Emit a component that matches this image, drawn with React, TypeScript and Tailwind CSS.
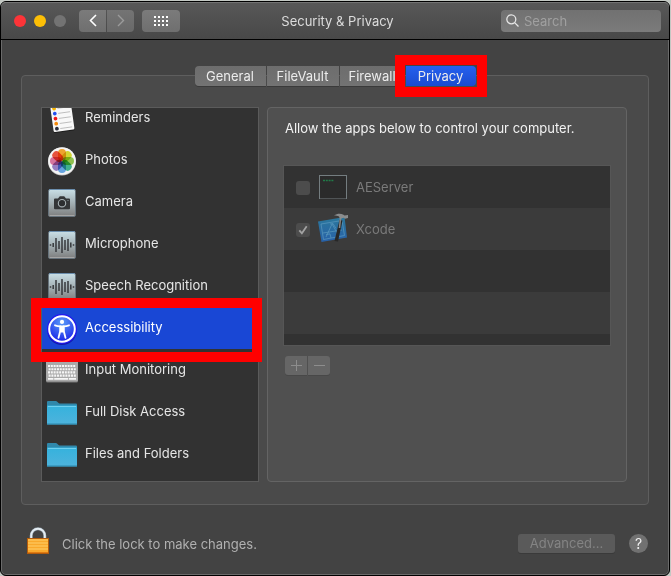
import type { ReactNode } from "react";

function RemindersIcon() {
  const dots = ["#f5b400", "#2450f0", "#f01818", "#f58a0a", "#2a2d3a"];
  return (
    <svg width="32" height="32" viewBox="0 0 32 32" aria-hidden="true">
      <g transform="rotate(-8 16 16)">
        <rect x="6" y="4" width="21" height="25" rx="1.5" fill="#1d1d1d" />
        <rect x="6" y="3" width="21" height="25" rx="1.5" fill="#f8f8f8" />
        {dots.map((c, i) => (
          <g key={c}>
            <circle cx="9.6" cy={4.5 + i * 5.1} r="1.9" fill={c} />
            <path d={`M13 ${4.8 + i * 5.1}H25`} stroke="#b4b4b4" strokeWidth="0.8" />
          </g>
        ))}
      </g>
    </svg>
  );
}

function PhotosIcon() {
  const petals = ["#f9a11b", "#d9dc20", "#8ac43f", "#2fb28a", "#5aa3e8", "#9277c4", "#dd6a9a", "#f0452c"];
  return (
    <svg width="32" height="32" viewBox="0 0 32 32" aria-hidden="true">
      <circle cx="16" cy="16.5" r="14" fill="#bdbdbd" />
      <circle cx="16" cy="16" r="13.8" fill="#f4f4f4" />
      {petals.map((c, i) => (
        <rect
          key={c}
          x="12"
          y="4"
          width="8"
          height="11.8"
          rx="4"
          fill={c}
          opacity="0.9"
          style={{ mixBlendMode: "multiply" }}
          transform={`rotate(${i * 45} 16 16)`}
        />
      ))}
    </svg>
  );
}

function PlateIcon({ id, children }: { id: string; children: ReactNode }) {
  return (
    <svg width="32" height="32" viewBox="0 0 32 32" aria-hidden="true">
      <defs>
        <linearGradient id={id} x1="0" y1="0" x2="0" y2="1">
          <stop offset="0" stopColor="#c9dfe6" />
          <stop offset="0.5" stopColor="#a3b0b4" />
          <stop offset="1" stopColor="#7d7d7d" />
        </linearGradient>
      </defs>
      <rect x="2.5" y="2.5" width="27" height="27" rx="1.5" fill={`url(#${id})`} stroke="#66727b" />
      <path d="M3.5 28.5H28.5" stroke="#a5a5a5" />
      <path d="M3 2.5H29" stroke="#6c8fae" />
      {children}
    </svg>
  );
}

function CameraIcon() {
  return (
    <PlateIcon id="plate-camera">
      <path d="M9 11.5h3l1.8-2.3h4.4l1.8 2.3h3a1 1 0 0 1 1 1v8.7a1 1 0 0 1-1 1H9a1 1 0 0 1-1-1v-8.7a1 1 0 0 1 1-1z" fill="#343638" />
      <circle cx="16" cy="16.2" r="3.7" fill="#2c2e30" stroke="#a9b3b6" strokeWidth="1.1" />
      <circle cx="22" cy="13.5" r="0.6" fill="#9aa" />
    </PlateIcon>
  );
}

function WaveIcon({ id }: { id: string }) {
  return (
    <PlateIcon id={id}>
      <path
        d="M4.5 15.3v1.4M7.2 14v4M10 9v14M13 12v8M16 8v16M19 11v10M22 10v12M24.8 13.5v5M27.5 15.3v1.4"
        stroke="#36393c"
        strokeWidth="1.5"
      />
    </PlateIcon>
  );
}

function AccessibilityIcon() {
  return (
    <svg width="32" height="32" viewBox="0 0 32 32" aria-hidden="true">
      <defs>
        <radialGradient id="access-blue" cx="0.5" cy="0.25" r="0.75">
          <stop offset="0" stopColor="#5a9cf8" />
          <stop offset="1" stopColor="#1a24e8" />
        </radialGradient>
      </defs>
      <ellipse cx="16" cy="18" rx="14.5" ry="14" fill="#1419a8" />
      <circle cx="16" cy="16" r="15" fill="#2318f0" />
      <circle cx="16" cy="16" r="12.8" fill="url(#access-blue)" stroke="#fff" strokeWidth="2" />
      <circle cx="16" cy="8.9" r="2.1" fill="#fff" />
      <path d="M9 12.3c2 .7 3.8 1 5.3 1.1v4.4l-1.8 7M23 12.3c-2 .7-3.8 1-5.3 1.1v4.4l1.8 7" fill="none" stroke="#fff" strokeWidth="1.8" strokeLinecap="round" />
      <path d="M13.6 12.6h4.8v6l-1.4 1h-2l-1.4-1z" fill="#fff" />
    </svg>
  );
}

function KeyboardIcon() {
  return (
    <svg width="32" height="32" viewBox="0 0 32 32" aria-hidden="true">
      <rect x="0" y="6" width="32" height="21.5" rx="1.5" fill="#777" />
      <rect x="0" y="5" width="32" height="21.5" rx="1.5" fill="#a9a9a9" />
      {[11, 14.2, 17.4, 20.6].map((y, i) => (
        <path key={y} d={`M${2 + (i % 2) * 0.6} ${y}H30`} stroke="#f6f6f6" strokeWidth="2.1" strokeDasharray="2 0.8" />
      ))}
      <path d="M2 23.8h5.4M8.2 23.8h14M23 23.8h7" stroke="#f6f6f6" strokeWidth="1.8" />
    </svg>
  );
}

function FolderIcon({ id }: { id: string }) {
  return (
    <svg width="32" height="32" viewBox="0 0 32 32" aria-hidden="true">
      <defs>
        <linearGradient id={id} x1="0" y1="0" x2="0" y2="1">
          <stop offset="0" stopColor="#35b2dd" />
          <stop offset="1" stopColor="#4eb3dc" />
        </linearGradient>
      </defs>
      <path d="M1 5a1 1 0 0 1 1-1h8c1.5 0 2 2.500 3.500 2.500H30a1 1 0 0 1 1 1V11H1z" fill="#3088ab" />
      <rect x="1" y="8.5" width="30" height="19" rx="0.5" fill={`url(#${id})`} />
      <path d="M2 9.5H30" stroke="#6fd0ef" />
      <path d="M1 27H31" stroke="#2b87ac" />
    </svg>
  );
}

function TerminalIcon() {
  return (
    <svg width="30" height="30" viewBox="0 0 30 30" aria-hidden="true">
      <rect x="1.5" y="3.5" width="27" height="23" fill="#2b2b2b" stroke="#747d80" />
      <path d="M2 26.5H28" stroke="#505456" />
      <path d="M5 8.5h11" stroke="#217a48" strokeWidth="1.6" strokeDasharray="2 0.8" />
    </svg>
  );
}

function XcodeIcon() {
  return (
    <svg width="32" height="32" viewBox="0 0 32 32" aria-hidden="true">
      <defs>
        <linearGradient id="xcode-blue" x1="0" y1="0" x2="0" y2="1">
          <stop offset="0" stopColor="#2b789c" />
          <stop offset="1" stopColor="#2861a8" />
        </linearGradient>
      </defs>
      <path d="M0 8.500 26.500 4 29 24.500 3.500 29z" fill="url(#xcode-blue)" />
      <path
        d="M3 11 24 7.500 26.500 22.500 5.500 26.500zM8 24l6-13 7 12M5 20l19-3M12 11l3-.5 3 5M8 21.500l4-.6 1 4"
        fill="none"
        stroke="#5b9abf"
        strokeWidth="0.7"
      />
      <path d="M21.500 7 24.500 7.500 20 28.500 16.500 28z" fill="#272727" />
      <path d="M22.500 5 21.500 15" stroke="#858585" strokeWidth="1.6" />
      <path d="M16 2.500c3.500-2.500 7-2.200 9.500-.8l1 .8 3.500-.5v3l-3 .7-1.500-1-3.500 1.300-1-2.500c-1.500-.8-3-.9-5-1z" fill="#8b8d8e" />
    </svg>
  );
}

function LockIcon() {
  return (
    <svg width="22" height="28" viewBox="0 0 22 28" aria-hidden="true">
      <path d="M4.200 13V8.500a6.800 6.800 0 0 1 13.600 0V13" fill="none" stroke="#8d9aa3" strokeWidth="3" />
      <path d="M4.200 13V8.500a6.800 6.800 0 0 1 13.600 0V13" fill="none" stroke="#e4edf3" strokeWidth="1.9" />
      <rect x="0.5" y="11.5" width="21" height="15" fill="#f9a92c" stroke="#b45c0c" />
      <path d="M1 13H21M1 16H21M1 19H21M1 22H21" stroke="#ffcf6b" />
      <path d="M1 25.500H21" stroke="#e07a12" />
    </svg>
  );
}

const categories = [
  { name: "Reminders", icon: <RemindersIcon /> },
  { name: "Photos", icon: <PhotosIcon /> },
  { name: "Camera", icon: <CameraIcon /> },
  { name: "Microphone", icon: <WaveIcon id="plate-mic" /> },
  { name: "Speech Recognition", icon: <WaveIcon id="plate-speech" /> },
  { name: "Accessibility", icon: <AccessibilityIcon />, selected: true },
  { name: "Input Monitoring", icon: <KeyboardIcon /> },
  { name: "Full Disk Access", icon: <FolderIcon id="folder-disk" /> },
  { name: "Files and Folders", icon: <FolderIcon id="folder-files" /> },
];

function TitleBar() {
  return (
    <header className="flex h-[38px] items-center justify-between rounded-t-[5px] border-b border-black bg-linear-to-b from-[#585858] to-[#484848] pr-2 pl-[13px] shadow-[inset_0_1px_0_#737373]">
      <div className="flex flex-1 items-center">
        <div className="flex gap-2">
          <button aria-label="Close" className="size-3 rounded-full bg-[#fc3438]" />
          <button aria-label="Minimize" className="size-3 rounded-full bg-[#fdbf06]" />
          <button aria-label="Zoom" disabled className="size-3 rounded-full bg-[#737373]" />
        </div>
        <div className="ml-[13px] flex gap-px">
          <button aria-label="Back" className="flex h-[22px] w-[27px] items-center justify-center rounded-l-sm bg-linear-to-b from-[#7b7b7b] to-[#6f6f6f]">
            <svg width="8" height="13" viewBox="0 0 8 13" fill="none" stroke="#fff" strokeWidth="1.6"><path d="M7 1 1.500 6.500 7 12" /></svg>
          </button>
          <button aria-label="Forward" disabled className="flex h-[22px] w-[27px] items-center justify-center rounded-r-sm bg-linear-to-b from-[#747474] to-[#696969]">
            <svg width="8" height="13" viewBox="0 0 8 13" fill="none" stroke="#9b9b9b" strokeWidth="1.4"><path d="M1 1 6.500 6.500 1 12" /></svg>
          </button>
        </div>
        <button aria-label="Show All" className="ml-2 flex h-[22px] w-[38px] items-center justify-center rounded-sm bg-linear-to-b from-[#7b7b7b] to-[#6f6f6f]">
          <svg width="14" height="10" viewBox="0 0 14 10" fill="#fff">
            {[0, 4, 8].map((y) => [0, 4, 8, 12].map((x) => <rect key={`${x}-${y}`} x={x} y={y} width="2" height="2" />))}
          </svg>
        </button>
      </div>
      <h1 className="text-[13px] leading-4 text-[#dcdcdc]">Security &amp; Privacy</h1>
      <div className="flex flex-1 justify-end">
        <label className="flex h-[22px] w-40 items-center gap-[5px] rounded-sm bg-linear-to-b from-[#717171] to-[#7b7b7b] pl-[5px]">
          <svg className="shrink-0" width="13" height="13" viewBox="0 0 13 13" fill="none" stroke="#e6e6e6" strokeWidth="1.3">
            <circle cx="5.3" cy="5.3" r="4.5" /><path d="M8.600 8.600 12.500 12.500" />
          </svg>
          <input type="search" aria-label="Search" placeholder="Search" className="w-full min-w-0 bg-transparent text-[13px] leading-4 text-white outline-none placeholder:text-[#a0a0a0]" />
        </label>
      </div>
    </header>
  );
}

function Tabs() {
  const tab = "h-5 bg-linear-to-b from-[#6d6d6d] to-[#737373] text-center shadow-[0_1px_0_#3a3a3a]";
  return (
    <nav className="relative z-10 -mb-[11px] flex justify-center gap-px text-[13px] leading-[19px] text-[#ececec]">
      <button className={`${tab} w-[71px] rounded-l-sm`}>General</button>
      <button className={`${tab} w-[72px]`}>FileVault</button>
      <button className={`${tab} w-[65px]`}>Firewall</button>
      <div className="relative">
        <button className="h-5 w-[70px] rounded-r-sm bg-linear-to-b from-[#2560ee] to-[#1b4bd0] text-center">Privacy</button>
        <div className="pointer-events-none absolute -top-[11px] -right-[11px] -bottom-[11px] -left-[11px] border-10 border-[#ff0000]" />
      </div>
    </nav>
  );
}

function Sidebar() {
  return (
    <div className="relative w-[218px] shrink-0">
      <div className="h-[375px] overflow-hidden border border-[#5b5b5b] bg-[#323232]">
        <ul className="-mt-[11px]">
          {categories.map((c) => (
            <li key={c.name}>
              <button
                className={`flex h-[42px] w-full items-center gap-[7px] pb-0.5 pl-1 text-left text-[13px] leading-4 ${
                  c.selected ? "bg-[#1947d5] text-white" : "text-[#e6e6e6]"
                }`}
              >
                <span className="pt-[3px]">{c.icon}</span>
                {c.name}
              </button>
            </li>
          ))}
        </ul>
      </div>
      <div className="pointer-events-none absolute top-[191px] -right-[3px] -left-[10px] h-16 border-10 border-[#ff0000]" />
    </div>
  );
}

function AppRow({ name, icon, checked }: { name: string; icon: ReactNode; checked: boolean }) {
  return (
    <li className="h-[42px] even:bg-[#3b3b3b]">
      <label className="flex h-full items-center pl-3 text-[13px] leading-4 text-[#7a7a7a]">
        <span className="relative mr-2 flex pt-px">
          <input type="checkbox" defaultChecked={checked} disabled className="size-3.5 appearance-none rounded-[3px] bg-[#4c4c4c]" />
          {checked && (
            <svg className="absolute inset-x-0 bottom-0" width="14" height="14" viewBox="0 0 14 14" fill="none" stroke="#a2a2a2" strokeWidth="1.8">
              <path d="M3.300 7.300 5.900 10.300 10.700 3.300" />
            </svg>
          )}
        </span>
        <span className="flex w-[38px]">{icon}</span>
        {name}
      </label>
    </li>
  );
}

function AppsPanel() {
  return (
    <section className="min-w-0 flex-1 rounded border border-[#646464] bg-[#505050] px-4 pt-3">
      <p className="pl-px text-[13px] leading-4 text-[#f2f2f2]">Allow the apps below to control your computer.</p>
      <ul className="mt-[30px] h-[179px] overflow-hidden bg-[#323232] shadow-[0_0_0_1px_#565656]">
        <AppRow name="AEServer" icon={<TerminalIcon />} checked={false} />
        <AppRow name="Xcode" icon={<XcodeIcon />} checked />
        <li className="h-[42px]" />
        <li className="h-[42px] bg-[#3b3b3b]" />
        <li className="h-[42px]" />
      </ul>
      <div className="mt-[11px] flex gap-px pl-px">
        <button aria-label="Add" disabled className="flex h-[19px] w-[22px] items-center justify-center rounded-l-[3px] bg-[#666666] shadow-[0_1px_0_#484848]">
          <svg width="11" height="11" viewBox="0 0 11 11" stroke="#8d8d8d"><path d="M0 5.500H11M5.500 0V11" /></svg>
        </button>
        <button aria-label="Remove" disabled className="flex h-[19px] w-[22px] items-center justify-center rounded-r-[3px] bg-[#666666] shadow-[0_1px_0_#484848]">
          <svg width="11" height="11" viewBox="0 0 11 11" stroke="#8d8d8d"><path d="M0 5.500H11" /></svg>
        </button>
      </div>
    </section>
  );
}

export default function App() {
  return (
    <div className="min-h-screen bg-[#c3c8c3] pt-px pr-px font-[Inter,'Liberation_Sans',sans-serif]">
      <div className="rounded-md border border-black bg-[#434343] shadow-[inset_0_0_0_1px_#6a6a6a]">
        <TitleBar />
        <main className="px-5 pt-[26px] pb-4">
          <Tabs />
          <div className="flex gap-2 rounded border border-[#5e5e5e] bg-[#4a4a4a] pt-[31px] pr-[21px] pb-[22px] pl-[19px]">
            <Sidebar />
            <AppsPanel />
          </div>
          <footer className="mt-[22px] flex h-8 items-center pr-px pl-[6px]">
            <button aria-label="Unlock" className="self-start">
              <LockIcon />
            </button>
            <p className="ml-[13px] pt-0.5 text-[13px] leading-4 text-[#b0b0b0]">Click the lock to make changes.</p>
            <button disabled className="ml-auto h-[19px] w-[97px] rounded-[3px] bg-[#5a5a5a] text-center text-[13px] leading-[19px] text-[#848484] shadow-[0_1px_0_#3a3a3a]">
              Advanced...
            </button>
            <button aria-label="Help" className="ml-[14px] size-[19px] rounded-full bg-[#717171] text-center text-[14px] leading-[19px] text-[#f0f0f0]">
              ?
            </button>
          </footer>
        </main>
      </div>
    </div>
  );
}
